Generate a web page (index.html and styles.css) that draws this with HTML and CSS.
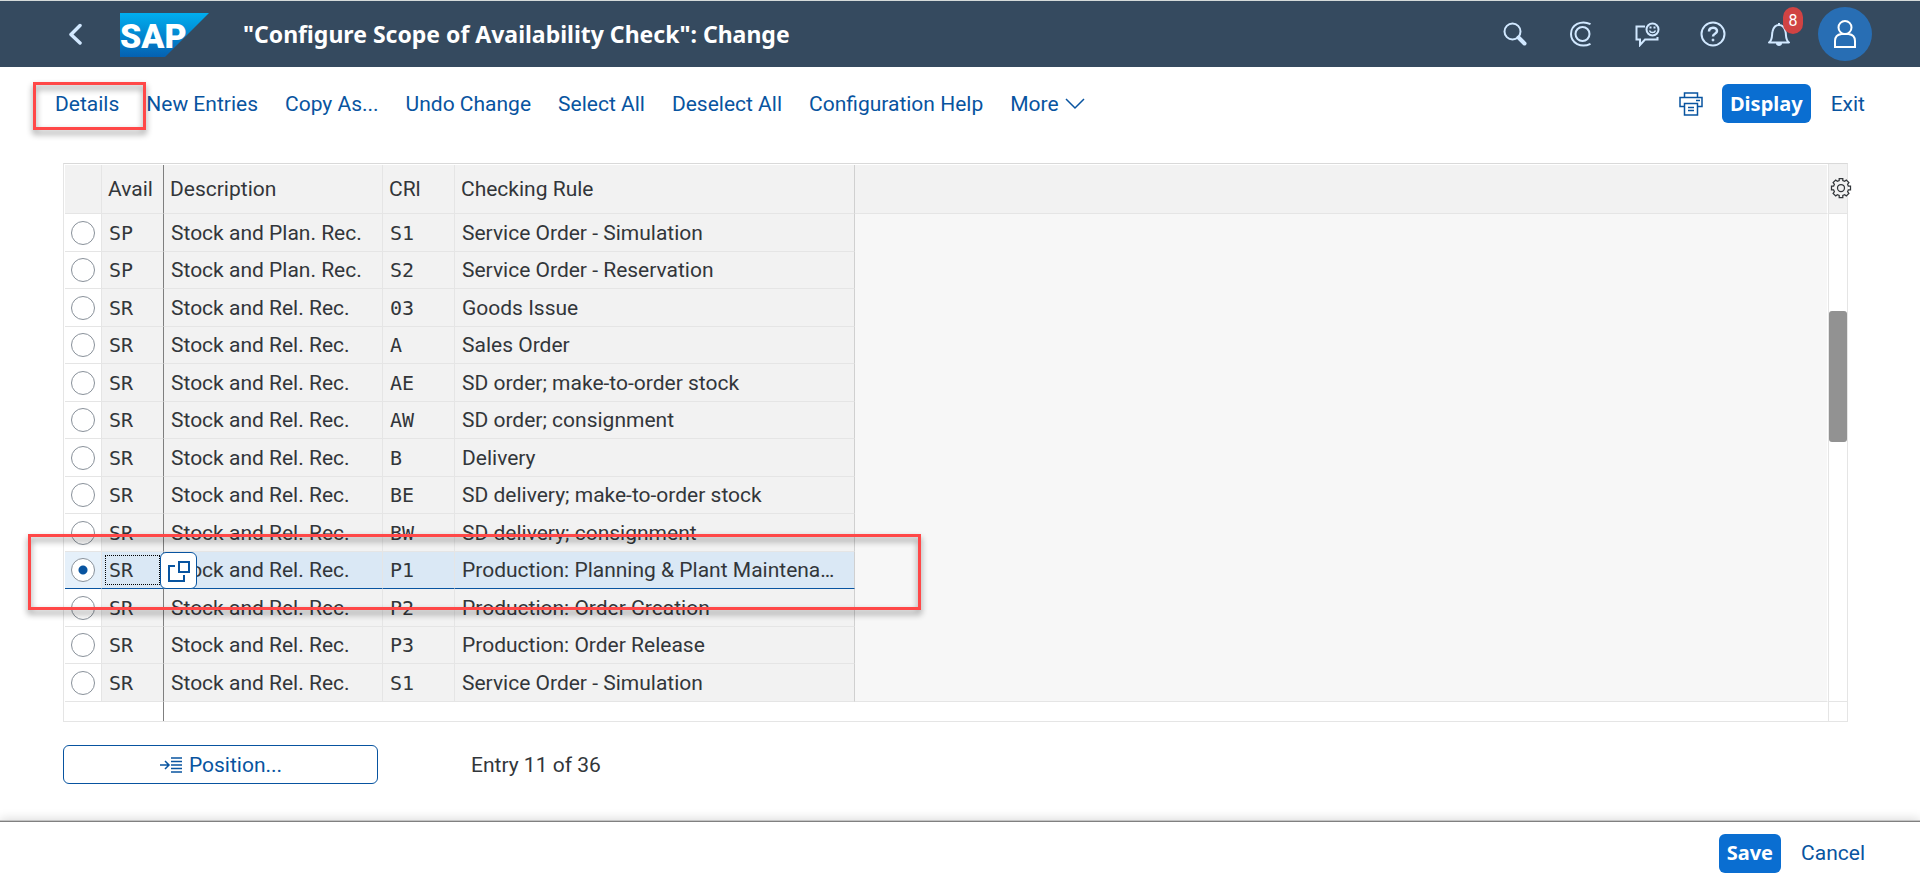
FILE: index.html
```
<!DOCTYPE html>
<html lang="en">
<head>
    <meta charset="UTF-8">
    <meta name="viewport" content="width=device-width, initial-scale=1.0">
    <title>"Configure Scope of Availability Check": Change</title>
    <link rel="stylesheet" href="styles.css">
</head>
<body>
    <header class="shell">
        <button type="button" class="shell-btn back" aria-label="Back">
            <svg width="14" height="22" viewBox="0 0 14 22" fill="none" stroke="#d1e8ff" stroke-width="3.500" stroke-linecap="round" stroke-linejoin="round"><path d="M11 2.500 2 11.500l9 8.500"/></svg>
        </button>
        <a href="#" class="logo" aria-label="SAP home">
            <svg width="89" height="44" viewBox="0 0 89 44">
                <defs>
                    <linearGradient id="logoFill" x1="0" y1="0" x2="0" y2="1">
                        <stop offset="0" stop-color="#00aeef"/>
                        <stop offset="1" stop-color="#0561b2"/>
                    </linearGradient>
                </defs>
                <path d="M0 0h89L45 44H0z" fill="url(#logoFill)"/>
                <text x="0" y="35" class="logo-text">SAP</text>
            </svg>
        </a>
        <h1 class="shell-title">"Configure Scope of Availability Check": Change</h1>
        <div class="shell-actions">
            <button type="button" class="shell-btn" aria-label="Search">
                <svg width="26" height="26" viewBox="0 0 26 26" fill="none" stroke="#d1e8ff" stroke-width="2"><circle cx="10.500" cy="10.500" r="8"/><path d="m16.500 16.500 6 6" stroke-width="4" stroke-linecap="round"/></svg>
            </button>
            <button type="button" class="shell-btn" aria-label="CoPilot">
                <svg width="26" height="26" viewBox="0 0 26 26" fill="none" stroke="#d1e8ff" stroke-width="2"><circle cx="14.500" cy="13" r="7"/><path d="M22.500 3.200C13-1.500 3 4 3 13s10 14.500 19.500 9.800"/></svg>
            </button>
            <button type="button" class="shell-btn" aria-label="Feedback">
                <svg width="26" height="26" viewBox="0 0 26 26" fill="none" stroke="#d1e8ff" stroke-width="2"><path d="M11 5.500H2.500v13H6v5.500l5-5.500h12.500V16"/><circle cx="18.500" cy="8.500" r="6"/><path d="M15.500 9.500c1 2.800 5 2.800 6 0" stroke-width="1.500"/><path d="M15.500 6.500h2M19.500 6.500h2"/></svg>
            </button>
            <button type="button" class="shell-btn" aria-label="Help">
                <svg width="26" height="26" viewBox="0 0 26 26" fill="none" stroke="#d1e8ff" stroke-width="2"><circle cx="13" cy="13" r="11.500"/><path d="M9 10.500c0-5 8-5 8-.5 0 3-4 2.500-4 5.500" stroke-width="2.500"/><circle cx="13" cy="19" r="1" fill="#d1e8ff" stroke-width="1"/></svg>
            </button>
            <button type="button" class="shell-btn" aria-label="Notifications">
                <svg width="26" height="26" viewBox="0 0 26 26" fill="none" stroke="#d1e8ff" stroke-width="2"><path d="M3 21.500c4-3 2.500-7 3.500-11C7.500 6 9.500 4 13 4s5.500 2 6.500 6.500c1 4-.5 8 3.500 11z" stroke-linejoin="round"/><path d="M13 2v2"/><path d="M10 22h6c0 4-6 4-6 0z" fill="#d1e8ff" stroke="none"/></svg>
                <span class="badge">8</span>
            </button>
            <button type="button" class="avatar" aria-label="User">
                <svg width="24" height="28" viewBox="0 0 24 28" fill="none" stroke="#fff" stroke-width="2"><circle cx="12" cy="7.500" r="6.500"/><path d="M2 27v-6c0-4 2.500-6.500 6.500-7h7c4 .5 6.500 3 6.500 7v6z"/></svg>
            </button>
        </div>
    </header>

    <nav class="toolbar">
        <div class="toolbar-item">
            <button type="button" class="link-btn">Details</button>
            <span class="marker marker-details"></span>
        </div>
        <button type="button" class="link-btn">New Entries</button>
        <button type="button" class="link-btn">Copy As...</button>
        <button type="button" class="link-btn">Undo Change</button>
        <button type="button" class="link-btn">Select All</button>
        <button type="button" class="link-btn">Deselect All</button>
        <button type="button" class="link-btn">Configuration Help</button>
        <button type="button" class="link-btn more">More
            <svg width="20" height="12" viewBox="0 0 20 12" fill="none" stroke="#0854a0" stroke-width="1.500"><path d="m1 1 9 9 9-9"/></svg>
        </button>
        <div class="toolbar-end">
            <button type="button" class="link-btn print" aria-label="Print">
                <svg width="24" height="24" viewBox="0 0 24 24" fill="none" stroke="#0854a0" stroke-width="1.500"><path d="M5.500 5V1h13v4M5 14.500H1V5.500h22v9h-4M17 8.500h4"/><path d="M5.500 11.500h13V23h-13zM9 15.500h6M9 18.500h6"/></svg>
            </button>
            <button type="button" class="btn">Display</button>
            <button type="button" class="link-btn">Exit</button>
        </div>
    </nav>

    <main class="content">
        <div class="grid-frame">
            <table class="grid">
                <colgroup>
                    <col class="col-select">
                    <col class="col-avail">
                    <col class="col-desc">
                    <col class="col-crl">
                    <col class="col-rule">
                    <col>
                </colgroup>
                <thead>
                    <tr><th></th><th>Avail</th><th>Description</th><th>CRl</th><th>Checking Rule</th><th></th></tr>
                </thead>
                <tbody>
                    <tr><td><input type="radio" name="entry" aria-label="SP S1"></td><td>SP</td><td>Stock and Plan. Rec.</td><td>S1</td><td>Service Order - Simulation</td><td></td></tr>
                    <tr><td><input type="radio" name="entry" aria-label="SP S2"></td><td>SP</td><td>Stock and Plan. Rec.</td><td>S2</td><td>Service Order - Reservation</td><td></td></tr>
                    <tr><td><input type="radio" name="entry" aria-label="SR 03"></td><td>SR</td><td>Stock and Rel. Rec.</td><td>03</td><td>Goods Issue</td><td></td></tr>
                    <tr><td><input type="radio" name="entry" aria-label="SR A"></td><td>SR</td><td>Stock and Rel. Rec.</td><td>A</td><td>Sales Order</td><td></td></tr>
                    <tr><td><input type="radio" name="entry" aria-label="SR AE"></td><td>SR</td><td>Stock and Rel. Rec.</td><td>AE</td><td>SD order; make-to-order stock</td><td></td></tr>
                    <tr><td><input type="radio" name="entry" aria-label="SR AW"></td><td>SR</td><td>Stock and Rel. Rec.</td><td>AW</td><td>SD order; consignment</td><td></td></tr>
                    <tr><td><input type="radio" name="entry" aria-label="SR B"></td><td>SR</td><td>Stock and Rel. Rec.</td><td>B</td><td>Delivery</td><td></td></tr>
                    <tr><td><input type="radio" name="entry" aria-label="SR BE"></td><td>SR</td><td>Stock and Rel. Rec.</td><td>BE</td><td>SD delivery; make-to-order stock</td><td></td></tr>
                    <tr><td><input type="radio" name="entry" aria-label="SR BW"></td><td>SR</td><td>Stock and Rel. Rec.</td><td>BW</td><td>SD delivery; consignment</td><td></td></tr>
                    <tr class="selected">
                        <td><input type="radio" name="entry" aria-label="SR P1" checked><span class="marker marker-row"></span></td>
                        <td>SR
                            <button type="button" class="value-help" aria-label="Value help">
                                <svg width="22" height="22" viewBox="0 0 22 22" fill="none" stroke="#0854a0" stroke-width="2"><path d="M7 6H1v15h15v-6"/><path d="M11 2h10v10H11z"/></svg>
                            </button>
                        </td>
                        <td>Stock and Rel. Rec.</td><td>P1</td><td>Production: Planning &amp; Plant Maintena…</td><td></td>
                    </tr>
                    <tr><td><input type="radio" name="entry" aria-label="SR P2"></td><td>SR</td><td>Stock and Rel. Rec.</td><td>P2</td><td>Production: Order Creation</td><td></td></tr>
                    <tr><td><input type="radio" name="entry" aria-label="SR P3"></td><td>SR</td><td>Stock and Rel. Rec.</td><td>P3</td><td>Production: Order Release</td><td></td></tr>
                    <tr><td><input type="radio" name="entry" aria-label="SR S1"></td><td>SR</td><td>Stock and Rel. Rec.</td><td>S1</td><td>Service Order - Simulation</td><td></td></tr>
                </tbody>
                <tfoot>
                    <tr><td></td><td></td><td></td><td></td><td></td><td></td></tr>
                </tfoot>
            </table>
            <div class="grid-side">
                <div class="side-head">
                    <button type="button" class="settings" aria-label="Settings">
                        <svg width="22" height="22" viewBox="0 0 22 22" fill="none" stroke="#32363a" stroke-width="1.250"><circle cx="11" cy="11" r="3.500"/><path d="M9.200 1.500h3.600v2l1.900.8 1.600-1.300 2.600 2.600-1.300 1.700.8 1.900h2.100v3.600h-2.100l-.8 1.900 1.300 1.700-2.600 2.600-1.600-1.300-1.900.8v2H9.200v-2l-1.900-.8L5.700 19l-2.600-2.600 1.300-1.700-.8-1.900H1.500V9.200h2.100l.8-1.900-1.300-1.700L5.700 3l1.600 1.300 1.900-.8z"/></svg>
                    </button>
                </div>
                <div class="scroll-track"><div class="scroll-thumb"></div></div>
                <div class="side-foot"></div>
            </div>
        </div>
        <div class="position-bar">
            <button type="button" class="position-btn">
                <svg width="24" height="18" viewBox="0 0 24 18" fill="none" stroke="#0854a0" stroke-width="1.500"><path d="M1 9h8M6 5l4 4-4 4M12 2h11M12 5.500h11M12 9h11M12 12.500h11M12 16h11"/></svg>
                Position...
            </button>
            <span class="entry-count">Entry 11 of 36</span>
        </div>
    </main>

    <footer class="footer">
        <button type="button" class="btn">Save</button>
        <button type="button" class="link-btn">Cancel</button>
    </footer>
</body>
</html>
```
FILE: styles.css
```
:root {
    --shell: #354a5f;
    --brand: #0a6ed1;
    --link: #0854a0;
    --text: #32363a;
    --line: #e5e5e5;
    --cell: #f2f2f2;
    --marker: #ff4848;
}

* {
    box-sizing: border-box;
}

body {
    margin: 0;
    min-height: 100vh;
    display: flex;
    flex-direction: column;
    font-family: Roboto, "Noto Sans", sans-serif;
    font-size: 21px;
    line-height: 24px;
    color: var(--text);
    background: #fff;
}

button {
    font: inherit;
    cursor: pointer;
}

svg {
    display: block;
}

/* shell bar */
.shell {
    display: flex;
    align-items: center;
    height: 67px;
    padding: 0 48px 0 69px;
    background: var(--shell);
    border-top: 1px solid #d5dad9;
}

.shell-btn {
    position: relative;
    padding: 0;
    border: none;
    background: none;
}

.logo {
    margin: 2px 34px 0 37px;
}

.logo-text {
    font-family: Roboto, sans-serif;
    font-size: 34px;
    font-weight: 900;
    fill: #fff;
}

.shell-title {
    margin: 0;
    font-family: "Noto Sans", sans-serif;
    font-size: 23px;
    line-height: 32px;
    font-weight: bold;
    color: #fff;
}

.shell-actions {
    display: flex;
    align-items: center;
    gap: 40px;
    margin-left: auto;
}

.badge {
    position: absolute;
    top: -14px;
    left: 17px;
    width: 20px;
    border-radius: 10px;
    background: #d04343;
    color: #fff;
    font-size: 16px;
    line-height: 27px;
    text-align: center;
}

.avatar {
    display: flex;
    align-items: center;
    justify-content: center;
    width: 54px;
    height: 54px;
    margin-left: -14px;
    padding: 0;
    border: none;
    border-radius: 50%;
    background: #286eb4;
}

/* toolbar */
.toolbar {
    display: flex;
    align-items: center;
    gap: 27px;
    padding: 17px 55px 0;
}

.toolbar-item {
    position: relative;
}

.toolbar-end {
    display: flex;
    align-items: center;
    margin-left: auto;
}

.link-btn {
    padding: 0;
    border: none;
    background: none;
    color: var(--link);
}

.more {
    display: flex;
    align-items: center;
    gap: 6px;
}

.print {
    margin-right: 19px;
}

.btn {
    height: 39px;
    margin-right: 20px;
    padding: 0 8px;
    border: none;
    border-radius: 6px;
    background: var(--brand);
    color: #fff;
    font-family: "Noto Sans", sans-serif;
    font-size: 20px;
    font-weight: bold;
}

/* red call-out frames */
.marker {
    position: absolute;
    z-index: 2;
    border: 3px solid var(--marker);
    filter: drop-shadow(0 4px 3px rgba(0, 0, 0, 0.45));
    pointer-events: none;
}

.marker-details {
    top: -10px;
    left: -22px;
    width: 113px;
    height: 48px;
}

.marker-row {
    top: -18px;
    left: -37px;
    width: 893px;
    height: 76px;
}

/* table */
.content {
    flex: 1;
    padding: 40px 72px 0 63px;
}

.grid-frame {
    display: flex;
    border: 1px solid var(--line);
    border-top-color: #d9d9d9;
}

.grid {
    flex: 1;
    width: 0;
    margin: 1px 0 0 1px;
    table-layout: fixed;
    border-collapse: separate;
    border-spacing: 0;
}

.col-select {
    width: 37px;
}

.col-avail {
    width: 62px;
}

.col-desc {
    width: 219px;
}

.col-crl {
    width: 72px;
}

.col-rule {
    width: 400px;
}

.grid th,
.grid td {
    position: relative;
    padding: 0 0 0 7px;
    border-right: 1px solid var(--line);
    border-bottom: 1px solid var(--line);
    background: var(--cell);
    text-align: left;
    font-weight: normal;
    white-space: nowrap;
}

.grid th {
    height: 49px;
    padding-left: 6px;
}

.grid td {
    height: 37px;
}

.grid tbody tr:nth-child(odd) td {
    height: 38px;
}

.grid tbody td:first-child {
    padding: 0;
    background: #fff;
}

.grid tbody td:nth-child(2),
.grid tbody td:nth-child(4) {
    font-family: "DejaVu Sans Mono", monospace;
    font-size: 20px;
}

.grid th:nth-child(2),
.grid td:nth-child(2) {
    border-right-color: #7f7f7f;
}

.grid th:nth-child(5),
.grid tbody td:nth-child(5) {
    border-right-color: #d0d0d0;
}

.grid th:last-child,
.grid td:last-child {
    border-right-color: #fff;
}

.grid tbody td:last-child {
    border-bottom: none;
    background: #f7f7f7;
}

.grid tbody tr:last-child td {
    border-bottom: 1px solid var(--line);
}

.grid tbody .selected td:not(:last-child) {
    border-bottom-color: var(--link);
    background: #dae8f5;
}

.grid tbody .selected td:first-child {
    background: #e5f0fa;
}

.grid .selected td:nth-child(2)::before {
    content: "";
    position: absolute;
    inset: 3px;
    border: 1px dotted #000;
}

.grid tfoot td {
    height: 19px;
    border-bottom: none;
    border-right-color: #fff;
    background: #fff;
}

.grid tfoot td:nth-child(2) {
    border-right-color: #7f7f7f;
}

.grid input {
    display: block;
    appearance: none;
    width: 24px;
    height: 24px;
    margin: 0 auto;
    border: 1px solid #89919a;
    border-radius: 50%;
    background: #fff;
}

.grid input:checked {
    background: radial-gradient(circle, var(--link) 4px, #fff 5px);
}

.value-help {
    position: absolute;
    z-index: 1;
    top: 0;
    right: -34px;
    display: flex;
    align-items: center;
    justify-content: center;
    width: 37px;
    height: 37px;
    padding: 0;
    border: 1px solid var(--link);
    border-radius: 6px;
    background: #fff;
}

.grid-side {
    display: flex;
    flex-direction: column;
    width: 19px;
    border-left: 1px solid var(--line);
}

.side-head {
    height: 50px;
    padding: 13px 0 0 1px;
    border-bottom: 1px solid var(--line);
    background: var(--cell);
}

.settings {
    padding: 0;
    border: none;
    background: none;
}

.scroll-track {
    flex: 1;
    padding-top: 97px;
}

.scroll-thumb {
    height: 131px;
    border-radius: 3px;
    background: #929292;
}

.side-foot {
    height: 20px;
    border-top: 1px solid var(--line);
}

.position-bar {
    display: flex;
    align-items: center;
    gap: 93px;
    margin-top: 23px;
}

.position-btn {
    display: flex;
    align-items: center;
    justify-content: center;
    gap: 6px;
    width: 315px;
    height: 39px;
    padding: 0;
    border: 1px solid var(--link);
    border-radius: 6px;
    background: #fff;
    color: var(--link);
}

.footer {
    display: flex;
    align-items: center;
    justify-content: flex-end;
    height: 59px;
    padding: 4px 55px 0 0;
    border-top: 1px solid #808080;
    box-shadow: 0 -1px 0 #c4c4c4, 0 -2px 10px rgba(0, 0, 0, 0.15);
}
```
